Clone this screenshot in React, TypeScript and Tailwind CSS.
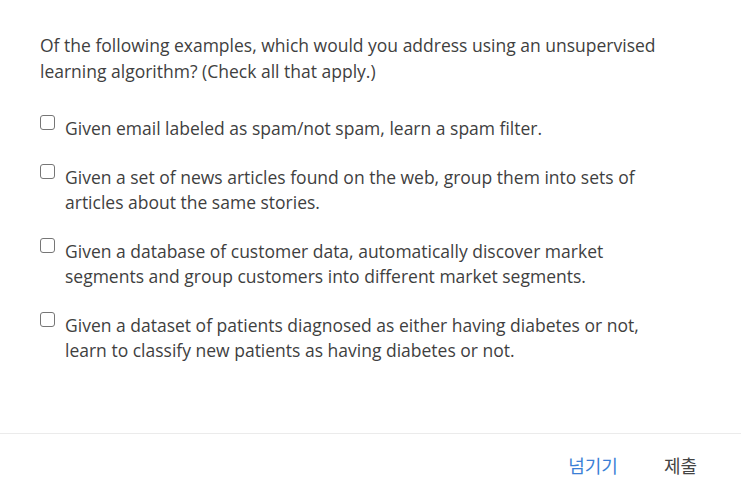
import React, { useState } from 'react';

const options = [
  'Given email labeled as spam/not spam, learn a spam filter.',
  'Given a set of news articles found on the web, group them into sets of articles about the same stories.',
  'Given a database of customer data, automatically discover market segments and group customers into different market segments.',
  'Given a dataset of patients diagnosed as either having diabetes or not, learn to classify new patients as having diabetes or not.',
];

const App: React.FC = () => {
  const [checked, setChecked] = useState<boolean[]>(options.map(() => false));

  const toggle = (i: number) => {
    setChecked((prev) => prev.map((v, idx) => (idx === i ? !v : v)));
  };

  return (
    <div
      className="w-[741px] h-[498px] bg-white text-[#3f3f3f] flex flex-col"
      style={{ fontFamily: '"Open Sans", "Noto Sans CJK KR", sans-serif' }}
    >
      {/* Question */}
      <div className="h-[433px] pl-10 pr-[72px] pt-8">
        <p className="text-[17.5px] leading-[26px]">
          Of the following examples, which would you address using an unsupervised learning algorithm? (Check all that apply.)
        </p>

        <div className="mt-8 flex flex-col gap-6">
          {options.map((text, i) => (
            <label key={i} className="flex items-start gap-[10px] cursor-pointer">
              <span
                onClick={() => toggle(i)}
                className={`mt-[-1px] w-[15px] h-[15px] shrink-0 rounded-[3px] border border-[#767676] bg-white ${
                  checked[i] ? 'bg-[#3b82d6] border-[#3b82d6]' : ''
                }`}
              />
              <span className="text-[17.5px] leading-[25px]">{text}</span>
            </label>
          ))}
        </div>
      </div>

      {/* Footer */}
      <div className="border-t border-[#ebebeb] flex-1 flex items-center justify-end pr-[44px] gap-[46px]">
        <button
          className="text-[18px] text-[#3b7fd6] pb-[1px]"
          style={{ fontFamily: '"Noto Sans CJK KR", sans-serif' }}
        >
          넘기기
        </button>
        <button
          className="text-[18px] text-[#444] pb-[1px]"
          style={{ fontFamily: '"Noto Sans CJK KR", sans-serif' }}
        >
          제출
        </button>
      </div>
    </div>
  );
};

export default App;
